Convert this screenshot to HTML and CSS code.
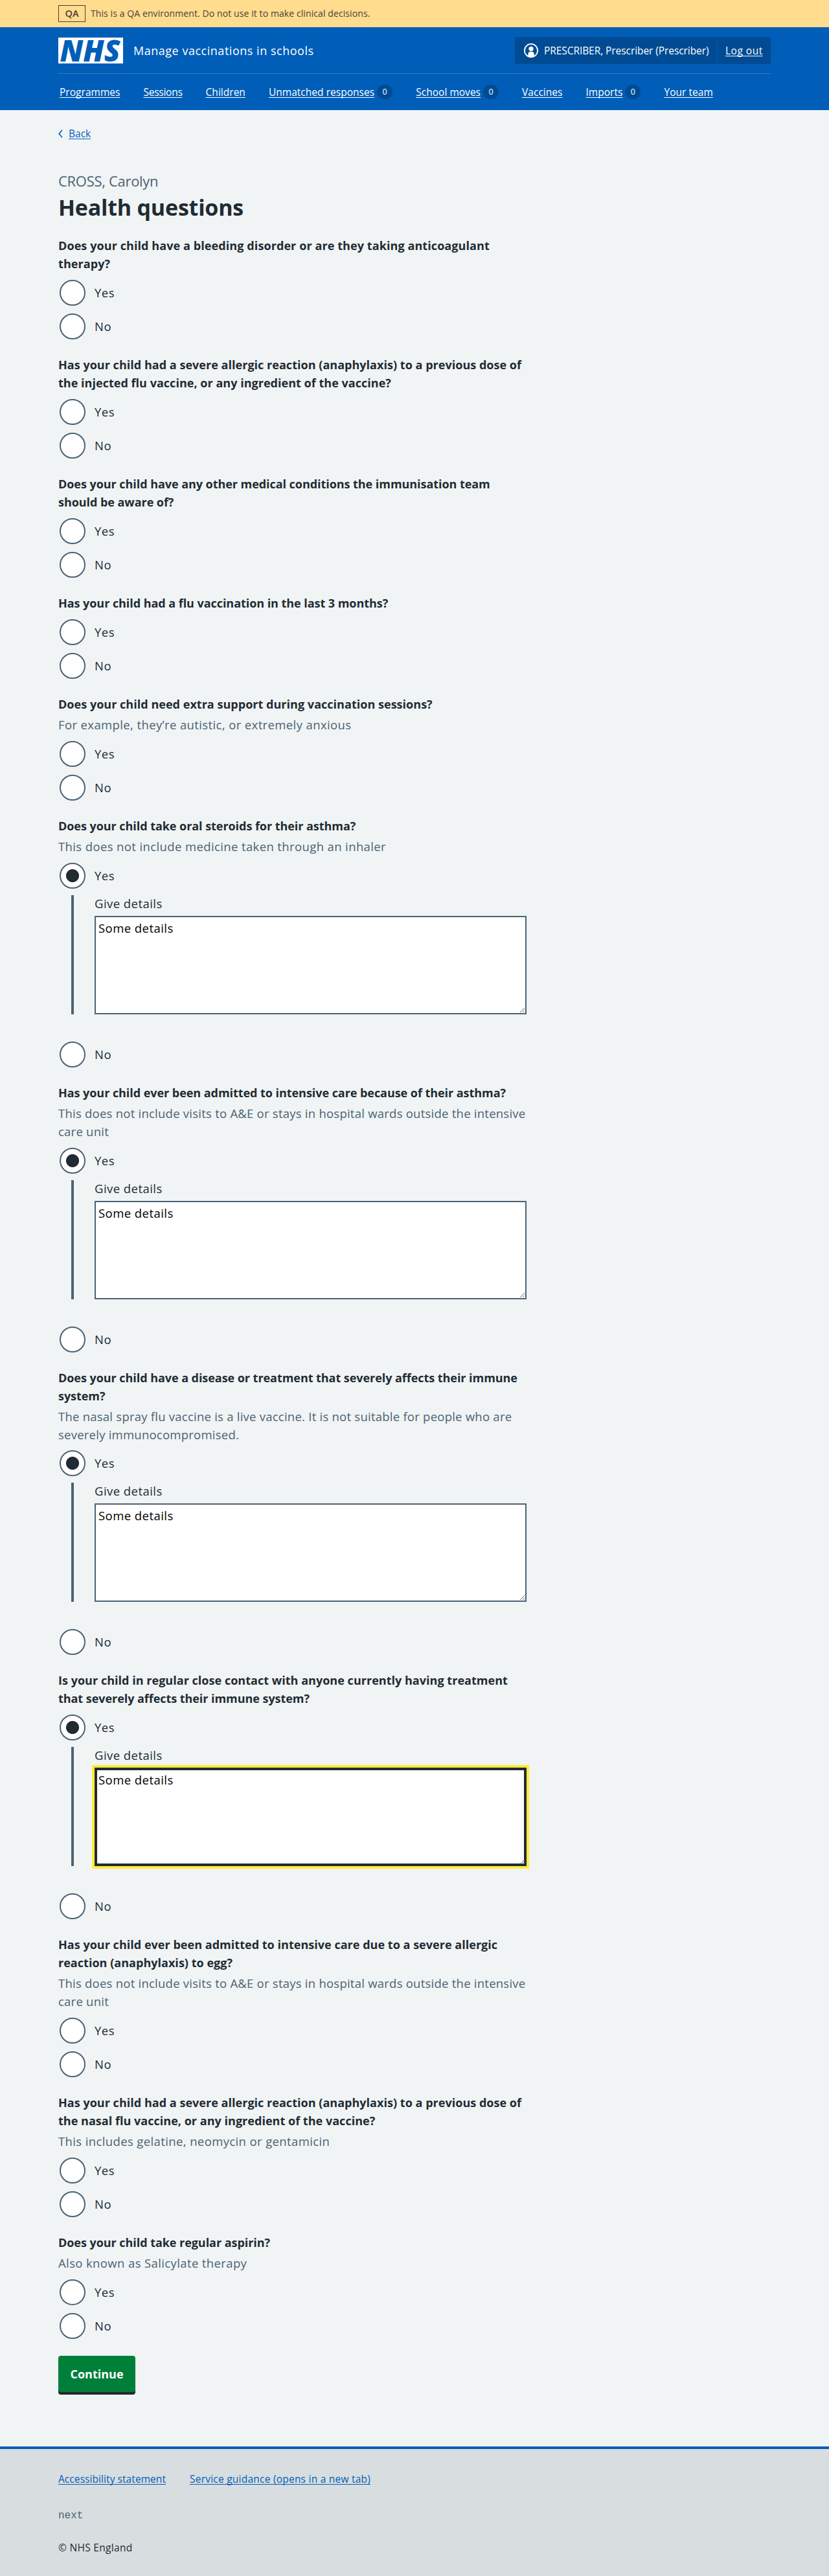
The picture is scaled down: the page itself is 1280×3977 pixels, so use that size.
FILE: index.html
```html
<!DOCTYPE html>
<html lang="en">
<head>
<meta charset="utf-8">
<title>Health questions</title>
<link rel="stylesheet" href="styles.css">
</head>
<body>
<div class="environment"><div class="container environment-inner"><strong class="environment-tag">QA</strong><span>This is a QA environment. Do not use it to make clinical decisions.</span></div></div>
<header class="header">
  <div class="container">
    <div class="header-top">
      <div class="brand">
        <svg class="logo" viewBox="0 0 100 40" width="100" height="40" role="img" aria-label="NHS"><rect width="100" height="40" fill="#fff"/><text class="logo-text" x="2.5" y="36.5" textLength="93" lengthAdjust="spacingAndGlyphs">NHS</text></svg>
        <span class="service-name">Manage vaccinations in schools</span>
      </div>
      <div class="account">
        <div class="account-user"><svg width="22" height="22" viewBox="0 0 22 22"><circle cx="11" cy="11" r="10.1" fill="none" stroke="#fff" stroke-width="1.8"/><circle cx="11" cy="8.3" r="3.6" fill="#fff"/><path d="M6.3 20v-3.2a4 4 0 0 1 4-4h1.4a4 4 0 0 1 4 4V20A10 10 0 0 1 6.300 20z" fill="#fff"/></svg><span>PRESCRIBER, Prescriber (Prescriber)</span></div>
        <a class="logout" href="#">Log out</a>
      </div>
    </div>
  </div>
  <div class="container">
    <nav class="nav">
      <a href="#">Programmes</a>
      <a class="nav-sessions" href="#">Sessions</a>
      <a href="#">Children</a>
      <div class="nav-item"><a href="#">Unmatched responses</a><span class="badge">0</span></div>
      <div class="nav-item"><a href="#">School moves</a><span class="badge">0</span></div>
      <a href="#">Vaccines</a>
      <div class="nav-item"><a href="#">Imports</a><span class="badge">0</span></div>
      <a href="#">Your team</a>
    </nav>
  </div>
</header>
<main class="container main">
  <div class="back"><svg width="7" height="13" viewBox="0 0 7 13"><path d="M6 .8 1.200 6.500 6 12.200" fill="none" stroke="#005eb8" stroke-width="1.600"/></svg><a href="#">Back</a></div>
  <div class="caption">CROSS, Carolyn</div>
  <h1>Health questions</h1>
  <form class="questions">
    <div class="question">
      <div class="legend loose">Does your child have a bleeding disorder or are they taking anticoagulant<br>therapy?</div>
      <div class="radios"><label class="radio"><i class="dot"></i>Yes</label><label class="radio"><i class="dot"></i>No</label></div>
    </div>
    <div class="question">
      <div class="legend">Has your child had a severe allergic reaction (anaphylaxis) to a previous dose of<br>the injected flu vaccine, or any ingredient of the vaccine?</div>
      <div class="radios"><label class="radio"><i class="dot"></i>Yes</label><label class="radio"><i class="dot"></i>No</label></div>
    </div>
    <div class="question">
      <div class="legend snug">Does your child have any other medical conditions the immunisation team<br>should be aware of?</div>
      <div class="radios"><label class="radio"><i class="dot"></i>Yes</label><label class="radio"><i class="dot"></i>No</label></div>
    </div>
    <div class="question">
      <div class="legend snug">Has your child had a flu vaccination in the last 3 months?</div>
      <div class="radios"><label class="radio"><i class="dot"></i>Yes</label><label class="radio"><i class="dot"></i>No</label></div>
    </div>
    <div class="question">
      <div class="legend">Does your child need extra support during vaccination sessions?</div>
      <div class="hint short">For example, they’re autistic, or extremely anxious</div>
      <div class="radios"><label class="radio"><i class="dot"></i>Yes</label><label class="radio"><i class="dot"></i>No</label></div>
    </div>
    <div class="question">
      <div class="legend snug">Does your child take oral steroids for their asthma?</div>
      <div class="hint short">This does not include medicine taken through an inhaler</div>
      <div class="radios">
        <label class="radio"><i class="dot checked"></i>Yes</label>
        <div class="conditional"><label class="field-label">Give details</label><textarea>Some details</textarea></div>
        <label class="radio"><i class="dot"></i>No</label>
      </div>
    </div>
    <div class="question">
      <div class="legend snug">Has your child ever been admitted to intensive care because of their asthma?</div>
      <div class="hint">This does not include visits to A&amp;E or stays in hospital wards outside the intensive<br>care unit</div>
      <div class="radios">
        <label class="radio"><i class="dot checked"></i>Yes</label>
        <div class="conditional"><label class="field-label">Give details</label><textarea>Some details</textarea></div>
        <label class="radio"><i class="dot"></i>No</label>
      </div>
    </div>
    <div class="question">
      <div class="legend snug">Does your child have a disease or treatment that severely affects their immune<br>system?</div>
      <div class="hint">The nasal spray flu vaccine is a live vaccine. It is not suitable for people who are<br>severely immunocompromised.</div>
      <div class="radios">
        <label class="radio"><i class="dot checked"></i>Yes</label>
        <div class="conditional"><label class="field-label">Give details</label><textarea>Some details</textarea></div>
        <label class="radio"><i class="dot"></i>No</label>
      </div>
    </div>
    <div class="question">
      <div class="legend">Is your child in regular close contact with anyone currently having treatment<br><span class="snug">that severely affects their immune system?</span></div>
      <div class="radios">
        <label class="radio"><i class="dot checked"></i>Yes</label>
        <div class="conditional"><label class="field-label">Give details</label><textarea class="focused">Some details</textarea></div>
        <label class="radio"><i class="dot"></i>No</label>
      </div>
    </div>
    <div class="question">
      <div class="legend">Has your child ever been admitted to intensive care due to a severe allergic<br>reaction (anaphylaxis) to egg?</div>
      <div class="hint">This does not include visits to A&amp;E or stays in hospital wards outside the intensive<br>care unit</div>
      <div class="radios"><label class="radio"><i class="dot"></i>Yes</label><label class="radio"><i class="dot"></i>No</label></div>
    </div>
    <div class="question">
      <div class="legend">Has your child had a severe allergic reaction (anaphylaxis) to a previous dose of<br>the nasal flu vaccine, or any ingredient of the vaccine?</div>
      <div class="hint short">This includes gelatine, neomycin or gentamicin</div>
      <div class="radios"><label class="radio"><i class="dot"></i>Yes</label><label class="radio"><i class="dot"></i>No</label></div>
    </div>
    <div class="question">
      <div class="legend snug">Does your child take regular aspirin?</div>
      <div class="hint short">Also known as Salicylate therapy</div>
      <div class="radios"><label class="radio"><i class="dot"></i>Yes</label><label class="radio"><i class="dot"></i>No</label></div>
    </div>
    <button class="button" type="button">Continue</button>
  </form>
</main>
<footer class="footer">
  <div class="container footer-inner">
    <div class="footer-links"><a class="footer-access" href="#">Accessibility statement</a><a class="footer-guide" href="#">Service guidance (opens in a new tab)</a></div>
    <code class="version">next</code>
    <div class="copyright">© NHS England</div>
  </div>
</footer>
</body>
</html>
```
FILE: styles.css
```css
* { box-sizing: border-box; }
body {
  margin: 0;
  background: #f0f4f5;
  color: #212b32;
  font: 15.5px/24px "Open Sans", "Noto Sans", sans-serif;
}
a { color: #005eb8; text-decoration: underline; text-decoration-thickness: 1px; text-underline-offset: 2px; text-decoration-skip-ink: none; }
.container { width: 1100px; margin: 0 auto; }

.environment { background: #ffdc8e; height: 42px; color: #4a4038; }
.environment-inner { display: flex; align-items: center; gap: 8px; height: 42px; font-size: 14px; letter-spacing: .09px; }
.environment-tag { width: 42px; height: 26px; border: 1px solid #4a4038; font-size: 14.5px; line-height: 24px; font-weight: 600; text-align: center; letter-spacing: 0; }

.header { background: #005eb8; color: #fff; height: 128px; }
.header a { color: #fff; }
.header-top { display: flex; justify-content: space-between; padding: 15px 0 14px; border-bottom: 1px solid #3876b7; }
.brand { display: flex; align-items: center; gap: 16px; }
.logo { display: block; overflow: visible; }
.logo-text { font: italic 800 46px "Open Sans", sans-serif; fill: #005eb8; }
.service-name { font-size: 18px; letter-spacing: .52px; }
.account { display: flex; width: 395px; height: 42px; background: #004b93; border-radius: 4px; line-height: 40px; }
.account-user { display: flex; align-items: center; gap: 9px; width: 313px; padding-left: 14px; border-right: 1px solid #005eb8; margin: 1px 0; letter-spacing: -.07px; white-space: nowrap; }
.logout { padding-left: 12px; letter-spacing: .5px; line-height: 42px; }
.nav { display: flex; gap: 36px; padding: 16px 0 0 2px; white-space: nowrap; letter-spacing: .03px; }
.nav-sessions { letter-spacing: -.25px; }
.nav-item { display: flex; align-items: center; gap: 4px; }
.badge { width: 24px; height: 22px; border-radius: 12px; background: #004b93; font-size: 12.5px; line-height: 22px; text-align: center; }

.main { display: flex; flex-direction: column; padding-top: 24px; height: 3607px; }
.back { display: flex; align-items: center; gap: 9px; height: 24px; }
.caption { margin-top: 45px; font-size: 22px; line-height: 32px; letter-spacing: -.3px; color: #4c6272; }
h1 { margin: 3px 0 23.8px; font-size: 34px; line-height: 44px; letter-spacing: -.2px; font-weight: 700; }
.questions { display: flex; flex-direction: column; align-items: flex-start; gap: 24px; width: 723px; font-size: 18.5px; line-height: 27.984px; letter-spacing: .45px; }
.question { display: flex; flex-direction: column; width: 100%; }
.legend { font-size: 18px; font-weight: 700; letter-spacing: .03px; white-space: nowrap; }
.legend.loose { letter-spacing: .09px; }
.legend.snug, .snug { letter-spacing: -.05px; }
.hint { margin: 3px 0 1px; color: #4c6272; letter-spacing: .24px; white-space: nowrap; }
.hint.short { letter-spacing: .38px; }
.radios { display: flex; flex-direction: column; gap: 8px; margin-top: 8px; }
.radio { display: flex; align-items: center; gap: 14px; height: 44px; padding: 0 0 0 2px; }
.dot { width: 40px; height: 40px; border: 2px solid #4c6272; border-radius: 50%; background: #fff; }
.dot.checked { background: radial-gradient(circle, #212b32 9.6px, #fff 10.4px); }
.conditional { display: flex; flex-direction: column; gap: 5px; margin: 0 0 32px 20px; border-left: 4px solid #4c6272; padding-left: 32px; }
.field-label { margin-top: -1px; }
textarea { display: block; width: 100%; height: 152px; margin: 0; padding: 3px 4px; border: 2px solid #4c6272; border-radius: 0; background: #fff; color: #000; font: inherit; letter-spacing: .45px; resize: vertical; outline: 0; }
textarea.focused { border-color: #212b32; box-shadow: inset 0 0 0 2px #212b32; outline: 4px solid #ffeb3b; }
.button { width: 119px; height: 56px; border: 0; border-radius: 4px; background: #007f3b; box-shadow: 0 4px 0 #212b32; color: #fff; font: 700 18px/28px "Open Sans", sans-serif; padding: 0; }

.footer { border-top: 4px solid #005eb8; background: #d8dde0; height: 200px; }
.footer-inner { display: flex; flex-direction: column; padding-top: 34px; }
.footer-links { display: flex; gap: 37px; }
.footer-access { letter-spacing: .07px; }
.footer-guide { letter-spacing: .23px; }
.version { margin-top: 33px; font: 16px/24px "Liberation Mono", monospace; color: #4c6272; }
.copyright { margin-top: 25px; letter-spacing: .3px; }
```
